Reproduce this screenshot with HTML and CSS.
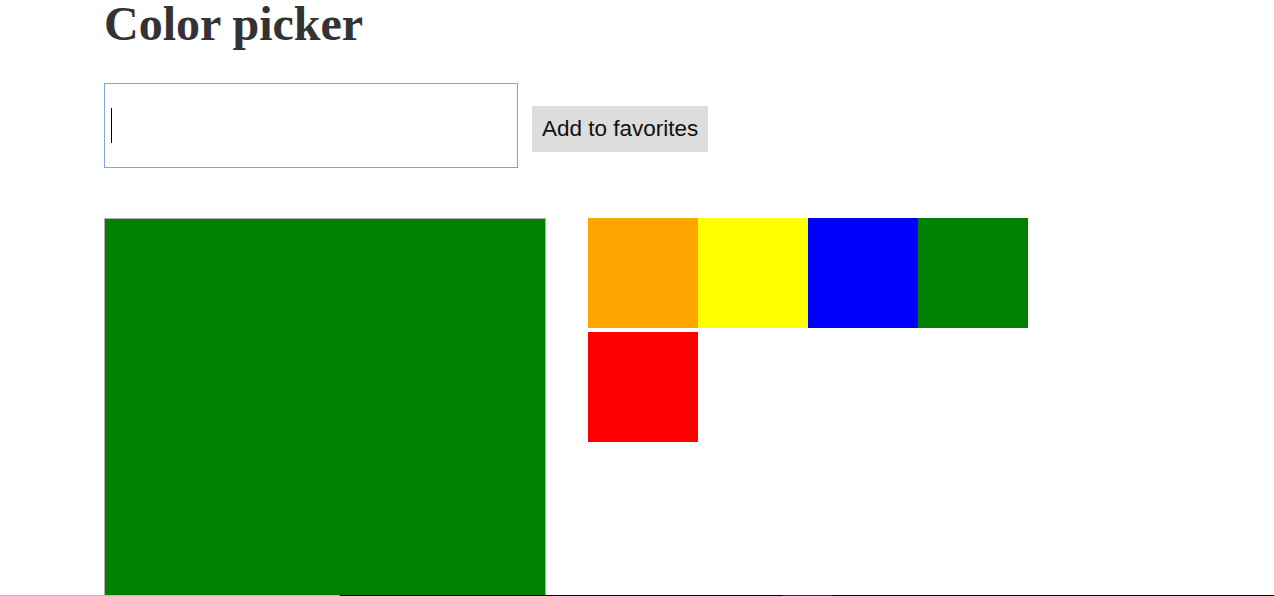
FILE: index.html
```html
<!DOCTYPE html>
<html lang="en">
<head>
<meta charset="utf-8">
<title>Color picker</title>
<link rel="stylesheet" href="styles.css">
</head>
<body>
<main class="page">
  <h1 class="title">Color picker</h1>
  <form class="form">
    <span class="input-wrap">
      <input class="color-input" type="text">
      <span class="caret"></span>
    </span>
    <button class="add-btn" type="button">Add to favorites</button>
  </form>
  <section class="workspace">
    <div class="preview"></div>
    <div class="favorites">
      <div class="swatch" style="background:orange"></div>
      <div class="swatch" style="background:yellow"></div>
      <div class="swatch" style="background:blue"></div>
      <div class="swatch" style="background:green"></div>
      <div class="swatch" style="background:red"></div>
    </div>
  </section>
</main>
<div class="edge-line"></div>
</body>
</html>
```
FILE: styles.css
```css
html, body {
  margin: 0;
  padding: 0;
  background: #fff;
}
.page {
  padding: 0 0 0 104px;
}
.title {
  margin: 0;
  font-family: "Liberation Serif", "Times New Roman", serif;
  font-weight: bold;
  font-size: 48px;
  line-height: 47px;
  color: #333;
}
.form {
  display: flex;
  align-items: baseline;
  gap: 14px;
  margin-top: 36px;
}
.input-wrap {
  position: relative;
  display: inline-flex;
}
.color-input {
  box-sizing: border-box;
  width: 414px;
  height: 85px;
  margin: 0;
  padding: 0 6px;
  border: 1px solid #7ea4e6;
  outline: none;
  font-family: "Liberation Sans", Arial, sans-serif;
  font-size: 30px;
  color: #000;
  caret-color: transparent;
}
.caret {
  position: absolute;
  left: 7px;
  top: 25px;
  width: 1px;
  height: 35px;
  background: #000;
}
.add-btn {
  margin: 0;
  padding: 10px;
  border: none;
  background: #ddd;
  font-family: "Liberation Sans", Arial, sans-serif;
  font-size: 22.5px;
  line-height: 26px;
  color: #111;
}
.workspace {
  display: flex;
  align-items: flex-start;
  gap: 42px;
  margin-top: 50px;
}
.preview {
  width: 440px;
  height: 440px;
  background: green;
  border: 1px solid #b0b0b0;
}
.favorites {
  display: flex;
  flex-wrap: wrap;
  row-gap: 4px;
  width: 440px;
}
.swatch {
  width: 110px;
  height: 110px;
}
.edge-line {
  position: fixed;
  left: 0;
  right: 0;
  bottom: 0;
  height: 1px;
  background: linear-gradient(to right, #bdbdbd 0, #bdbdbd 340px, #000 340px, #000 783px, #3a3a3a 783px, #3a3a3a 832px, #000 832px, #000 100%);
}
```
